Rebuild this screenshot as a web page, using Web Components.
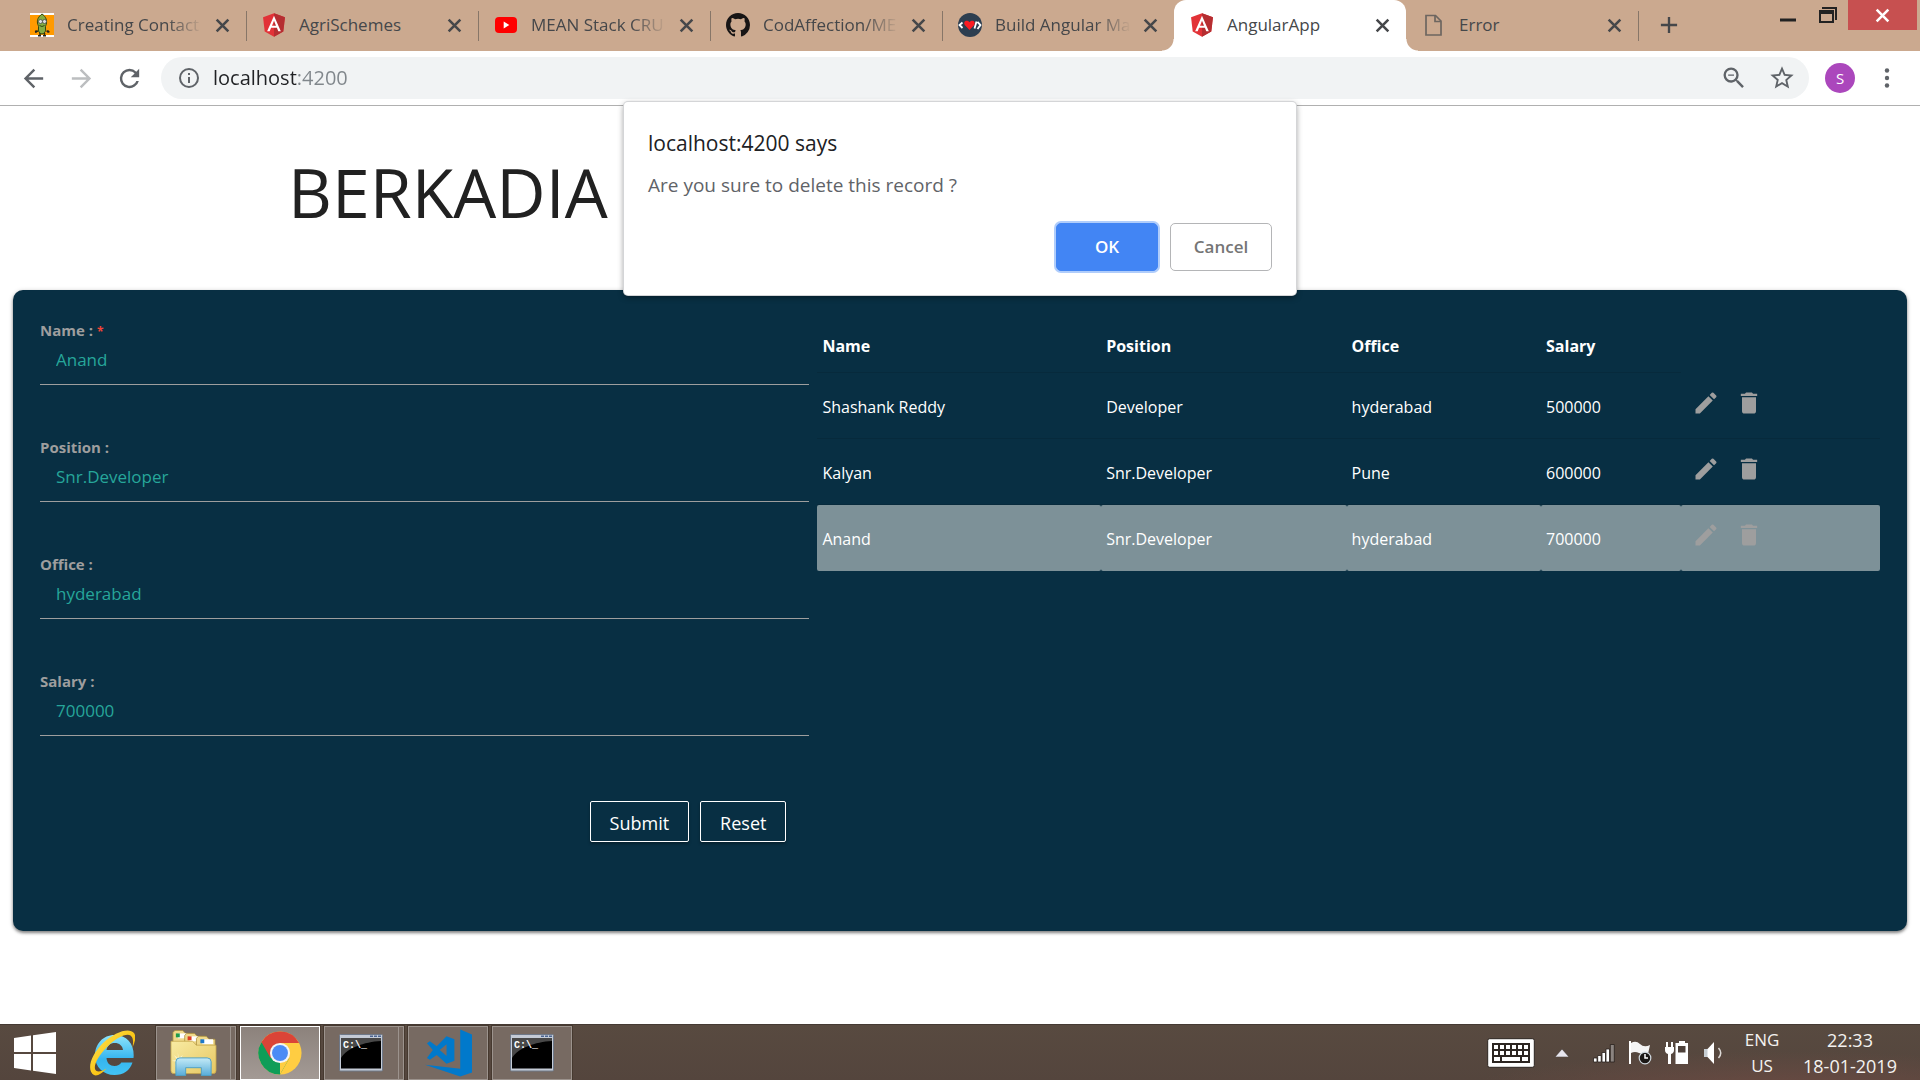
<!DOCTYPE html>
<html lang="en">
<head>
<meta charset="utf-8">
<title>AngularApp</title>
<style>
  html, body { margin: 0; height: 100%; }
  body { font-family: "Open Sans", "Noto Sans", sans-serif; background: #fff; color: #212121; }
</style>
</head>
<body>
<desktop-shell>
  <browser-tabs slot="browser"></browser-tabs>
  <browser-toolbar slot="browser"></browser-toolbar>
  <employee-page slot="page"></employee-page>
  <confirm-dialog slot="dialog" heading="localhost:4200 says">Are you sure to delete this record ?</confirm-dialog>
  <task-bar slot="taskbar"></task-bar>
</desktop-shell>

<script>
const ICONS = {
  close: ['0 0 16 16', '<path d="M2.5 2.5l11 11m0-11l-11 11" stroke="currentColor" stroke-width="2.4" fill="none"/>'],
  plus: ['0 0 20 20', '<path d="M10 1v18M1 10h18" stroke="currentColor" stroke-width="2.6" fill="none"/>'],
  minimize: ['0 0 16 16', '<path d="M0 6.5h16v3H0z" fill="currentColor"/>'],
  restore: ['0 0 18 16', '<path d="M3 0h15v13h-2V2H3zM0 3h15v13H0zm2 4v7h11V7z" fill="currentColor" fill-rule="evenodd"/>'],
  back: ['0 0 24 24', '<path d="M20 11H7.83l5.59-5.59L12 4l-8 8 8 8 1.41-1.41L7.83 13H20v-2z" fill="currentColor"/>'],
  forward: ['0 0 24 24', '<path d="M4 11h12.17l-5.59-5.59L12 4l8 8-8 8-1.41-1.41L16.17 13H4v-2z" fill="currentColor"/>'],
  reload: ['0 0 24 24', '<path d="M17.65 6.35A7.96 7.96 0 0 0 12 4a8 8 0 1 0 7.73 10h-2.08A6 6 0 1 1 12 6c1.66 0 3.14.69 4.22 1.78L13 11h7V4l-2.35 2.35z" fill="currentColor"/>'],
  info: ['0 0 24 24', '<path d="M11 17h2v-6h-2v6zm1-15a10 10 0 1 0 0 20 10 10 0 0 0 0-20zm0 18a8 8 0 1 1 0-16 8 8 0 0 1 0 16zM11 9h2V7h-2v2z" fill="currentColor"/>'],
  zoomout: ['0 0 24 24', '<path d="M15.5 14h-.79l-.28-.27A6.47 6.47 0 0 0 16 9.5 6.5 6.5 0 1 0 9.5 16c1.61 0 3.09-.59 4.23-1.57l.27.28v.79l5 4.99L20.49 19l-4.99-5zm-6 0a4.5 4.5 0 1 1 0-9 4.5 4.5 0 0 1 0 9zM7 9h5v1H7z" fill="currentColor"/>'],
  star: ['0 0 24 24', '<path d="M22 9.24l-7.19-.62L12 2 9.19 8.63 2 9.24l5.46 4.73L5.82 21 12 17.27 18.18 21l-1.63-7.03L22 9.24zM12 15.4l-3.76 2.27 1-4.28-3.32-2.88 4.38-.38L12 6.1l1.71 4.04 4.38.38-3.32 2.88 1 4.28L12 15.4z" fill="currentColor"/>'],
  dots: ['0 0 24 24', '<g fill="currentColor"><circle cx="12" cy="4.5" r="2.2"/><circle cx="12" cy="12" r="2.2"/><circle cx="12" cy="19.5" r="2.2"/></g>'],
  edit: ['0 0 24 24', '<path d="M3 17.25V21h3.75L17.81 9.94l-3.75-3.75L3 17.25zM20.71 7.04a1 1 0 0 0 0-1.41l-2.34-2.34a1 1 0 0 0-1.41 0l-1.83 1.83 3.75 3.75 1.83-1.83z" fill="currentColor"/>'],
  trash: ['0 0 24 24', '<path d="M6 19c0 1.1.9 2 2 2h8c1.1 0 2-.9 2-2V7H6v12zM19 4h-3.5l-1-1h-5l-1 1H5v2h14V4z" fill="currentColor"/>'],
  angular: ['28 28 194 204', '<path d="M125 30L31.9 63.2l14.2 123.1L125 230l78.9-43.7 14.2-123.1z" fill="#e23237"/><path d="M125 30v200l78.9-43.7 14.2-123.1z" fill="#b52e31"/><path d="M125 52.1L66.8 182.6h21.7l11.7-29.2h49.4l11.7 29.2H183zm17 83.3h-34l17-40.9z" fill="#fff"/>'],
  youtube: ['0 0 24 24', '<rect x="1" y="4" width="22" height="16" rx="4" fill="#f00"/><path d="M9.7 8.6v6.8l5.6-3.4z" fill="#fff"/>'],
  github: ['0 0 16 16', '<path d="M8 0C3.58 0 0 3.58 0 8c0 3.54 2.29 6.53 5.47 7.59.4.07.55-.17.55-.38 0-.19-.01-.82-.01-1.49-2.01.37-2.53-.49-2.69-.94-.09-.23-.48-.94-.82-1.13-.28-.15-.68-.52-.01-.53.63-.01 1.08.58 1.23.82.72 1.21 1.87.87 2.33.66.07-.52.28-.87.51-1.07-1.78-.2-3.64-.89-3.64-3.95 0-.87.31-1.59.82-2.15-.08-.2-.36-1.02.08-2.12 0 0 .67-.21 2.2.82a7.6 7.6 0 0 1 4 0c1.53-1.04 2.2-.82 2.2-.82.44 1.1.16 1.92.08 2.12.51.56.82 1.27.82 2.15 0 3.07-1.87 3.75-3.65 3.95.29.25.54.73.54 1.48 0 1.07-.01 1.93-.01 2.2 0 .21.15.46.55.38A8.01 8.01 0 0 0 16 8c0-4.42-3.58-8-8-8z" fill="#171515"/>'],
  codeheart: ['0 0 24 24', '<circle cx="12" cy="12" r="12" fill="#2d3e50"/><path d="M4.500 9.500L1.500 12l3 3M19.500 9l3 3-3 4M18.500 8.500l-2 7" stroke="#fff" stroke-width="1.800" fill="none"/><path d="M11.500 17L6.800 12C4.800 9 8.500 6 11.500 9.300 14.500 6 18 9 16.200 12z" fill="#fb1b22"/>'],
  pea: ['0 0 24 24', '<path d="M0 0h24v24H0z" fill="#fff"/><path d="M0 2h24v20H0z" fill="#ff9a00"/><path d="M10 20v3M14.500 20v3M8 18l-3 1M16.500 18l3 1" stroke="#26310f" stroke-width="1.500"/><path d="M12 1c-4 3-5 6-4.500 9 .2 2 1.500 3 1 5-.5 3 .5 5.500 3.500 6 3-.5 4-3 3.500-6-.5-2 1-3 1-5C17 6 15 3 12 1z" fill="#84ad42" stroke="#33440f"/><circle cx="10.500" cy="8.500" r="2" fill="#ddd" stroke="#444" stroke-width=".7"/><circle cx="14.500" cy="8.500" r="2" fill="#ddd" stroke="#444" stroke-width=".7"/><path d="M9.500 12.500q2.500 2 5 0" stroke="#33440f" fill="none"/><path d="M5 17.500h2v2H5zM17 17.500h2v2h-2zM8 22h3v1.500H8zM13 22h3v1.500h-3z" fill="#222"/>'],
  file: ['0 0 24 24', '<path d="M4 2.500h9.500L19 8v14H4z" fill="none" stroke="#6d6660" stroke-width="1.700"/><path d="M13 2.500V8.500h6" fill="none" stroke="#6d6660" stroke-width="1.700"/>'],
  windows: ['0 0 42 42', '<path d="M0 6l17-2.500V20H0zM19 3.200L42 0v20H19zM0 22h17v16.500L0 36zM19 22h23v20l-23-3.200z" fill="#fff"/>'],
  ie: ['0 0 46 46', '<defs><linearGradient id="b" x1="0" y1="0" x2="0" y2="1"><stop offset="0" stop-color="#8fe4fb"/><stop offset=".6" stop-color="#35b5ee"/><stop offset="1" stop-color="#43c3f4"/></linearGradient><linearGradient id="g" x1="0" y1="0" x2="1" y2="1"><stop offset="0" stop-color="#ffe95c"/><stop offset=".6" stop-color="#f9c211"/><stop offset="1" stop-color="#d99400"/></linearGradient></defs><path d="M44.500 28H17.500c.3 5 3.500 8 8 8 3.200 0 5.500-1.300 6.800-3.500h11.200C41 40.500 34.500 45 25.500 45 14 45 6 37 6 25.500S14 5 25.500 5c12 0 19.500 8.500 19.200 20.500zM34 20c-.5-4.300-3.700-7-8.300-7-4.500 0-7.500 2.700-8.200 7z" fill="url(#b)"/><path d="M5 45C-3 40 2 25 14 13 26 2 40-3 45 3c2.500 3.500 1 9-1.500 14.500 1-6 .8-10-2-12C37 3 27 8 18 17 8 27 3 38 7.500 41c2 1.200 6 0 10-2.500C13 43.500 8 46.500 5 45z" fill="url(#g)"/>'],
  explorer: ['0 0 48 46', '<defs><linearGradient id="f" x1="0" y1="0" x2="1" y2="1"><stop offset="0" stop-color="#f8eba3"/><stop offset="1" stop-color="#e6c762"/></linearGradient><linearGradient id="s" x1="0" y1="0" x2="0" y2="1"><stop offset="0" stop-color="#c4ebf7"/><stop offset="1" stop-color="#58acd9"/></linearGradient></defs><path d="M3 14V2l2-2h8l3 3h8v11z" fill="#efd98a" stroke="#ab8f3f" stroke-width=".8"/><path d="M8 3h10v5H8z" fill="#fff"/><path d="M6 3h4v4H6z" fill="#1f9b4b"/><path d="M15 14V5l2-2h8l3 3h8v9z" fill="#efd98a" stroke="#ab8f3f" stroke-width=".8"/><path d="M20 6h11v5H20z" fill="#fff"/><path d="M18 6h4v4h-4z" fill="#dd3f22"/><path d="M27 17V8l2-2h8l3 3h6v9z" fill="#efd98a" stroke="#ab8f3f" stroke-width=".8"/><path d="M33 9h11v5H33z" fill="#fff"/><path d="M31 9h4v4h-4z" fill="#1d78c8"/><path d="M1 11h22l4 4h20v26q0 3-3 3H4q-3 0-3-3z" fill="url(#f)" stroke="#c5a64c" stroke-width=".8"/><path d="M8 22l1 6 4-3-2 5 7 1-7 1 2 5-5-4-3 5 1-6-4-1 5-1-3-5 4 3z" fill="#fffce6" opacity=".65"/><path d="M6 46V32q0-4 4-4h28q4 0 4 4v14H32v-8H16v8z" fill="url(#s)" stroke="#4fa1c6"/>'],
  chrome: ['0 0 48 48', '<circle cx="24" cy="24" r="23.500" fill="#ffcd42"/><path d="M24 24L3.600 12.200A23.500 23.500 0 0 0 24 47.500L34.200 29.800z" fill="#0f9d58"/><path d="M24 13.200h20.800A23.500 23.500 0 0 0 3.700 12L13.800 29.800z" fill="#db4437"/><path d="M24 47.500L34 30l10.500-17H24z" fill="#ffcd42"/><circle cx="24" cy="24" r="11" fill="#f4f4f4"/><circle cx="24" cy="24" r="8.700" fill="#4c8bf5"/>'],
  cmd: ['0 0 44 38', '<rect x=".5" y=".5" width="43" height="36.500" rx="1" fill="#c4cbd6" stroke="#6e7888"/><path d="M2 4h40v30.500H2z" fill="#000"/><path d="M2 4h40v3C25 8 8 14 2 24z" fill="#484848"/><path d="M31 1.500h3v1.500h-3zm4 0h3v1.500h-3zm4 0h3v1.500h-3z" fill="#4c6590"/><text x="4" y="14" font-family="Liberation Mono, monospace" font-size="10" font-weight="700" fill="#fff">C:\\_</text>'],
  vscode: ['0 0 48 48', '<path d="M36 0l12 5v39l-12 4L0 36l36 4z" fill="#0179cb"/><path d="M22 7l8 3v22l-8 3-10-9-7 5-3-2 6-8-6-7 3-2 7 5zm0 8l-7 6 7 6z" fill="#0179cb" fill-rule="evenodd"/>'],
  keyboard: ['0 0 48 30', '<rect x=".7" y=".7" width="46.600" height="28.600" rx="2" fill="#fff" stroke="#2c2521"/><path d="M5 5h38v20H5z" fill="#2c2521"/><g fill="#fff"><path d="M7 7h4v4H7zm6 0h4v4h-4zm6 0h4v4h-4zm6 0h4v4h-4zm6 0h4v4h-4zm6 0h4v4h-4zM7 13h4v4H7zm6 0h4v4h-4zm6 0h4v4h-4zm6 0h4v4h-4zm6 0h4v4h-4zm6 0h4v4h-4zM7 19h6v4H7zm8 0h18v4H15zm20 0h6v4h-6z"/></g>'],
  chevron: ['0 0 14 8', '<path d="M0 8l7-8 7 8z" fill="#e8e6ee" stroke="#332b27" stroke-width=".5"/>'],
  signal: ['0 0 22 20', '<g stroke="#27201c" stroke-width=".8"><path d="M.5 15h3.500v4H.5zM4.700 12.500h3.500V19H4.700zM9 9.500h3.500V19H9zM13 6h3.500v13H13z" fill="#fff"/><path d="M17.300 1.500h4V19h-4z" fill="#8b8480"/></g>'],
  flag: ['0 0 24 24', '<path d="M1 0h2v23H1z" fill="#fff"/><path d="M3 2q5-3 9 1t10 1l-2 9q-5 1-9-1t-8 0z" fill="#f4f4f4"/><circle cx="17" cy="17" r="5.800" fill="#1b1715" stroke="#cfd8de" stroke-width="1.200"/><path d="M17 13v4h3" stroke="#fff" stroke-width="1.500" fill="none"/>'],
  battery: ['0 0 24 24', '<path d="M2 1v5M7 1v5" stroke="#fff" stroke-width="2"/><path d="M0 6h9v3q0 3-3 4v10H3V13q-3-1-3-4z" fill="#fff"/><path d="M14 0h6v2h3v21H10.500V2H14z" fill="#fff"/><path d="M13 5h7.500v6.500H13z" fill="#4d4039"/>'],
  speaker: ['0 0 20 22', '<path d="M1 7h4v8H1z" fill="#c6cdd2"/><path d="M4.500 7L11 0v22l-6.500-7z" fill="#fff"/><path d="M15.500 6q4.500 5 0 10" stroke="#ddd9d6" stroke-width="1.500" fill="none"/>'],
};

class UiIcon extends HTMLElement {
  connectedCallback() {
    if (this.shadowRoot) return;
    const [box, art] = ICONS[this.getAttribute('name')];
    this.attachShadow({ mode: 'open' }).innerHTML = `
      <style>
        :host { display: inline-flex; flex: none; width: var(--icon-width, 24px); height: var(--icon-height, var(--icon-width, 24px)); }
        svg { width: 100%; height: 100%; display: block; }
      </style>
      <svg viewBox="${box}" aria-hidden="true">${art}</svg>`;
  }
}

const BUTTON_RESET = `
  button { font: inherit; color: inherit; background: none; border: 0; padding: 0; margin: 0; display: inline-flex; align-items: center; justify-content: center; cursor: pointer; }
`;

class DesktopShell extends HTMLElement {
  constructor() {
    super();
    this.attachShadow({ mode: 'open' }).innerHTML = `
      <style>
        :host { display: flex; flex-direction: column; min-height: 100vh; }
        main { flex: 1; position: relative; }
        .overlay { position: absolute; z-index: 2; top: -4px; left: 0; right: 0; display: flex; justify-content: center; }
      </style>
      <header><slot name="browser"></slot></header>
      <main>
        <slot name="page"></slot>
        <div class="overlay"><slot name="dialog"></slot></div>
      </main>
      <slot name="taskbar"></slot>`;
  }
}

class BrowserTab extends HTMLElement {
  connectedCallback() {
    if (this.shadowRoot) return;
    this.attachShadow({ mode: 'open' }).innerHTML = `
      <style>
        ${BUTTON_RESET}
        :host { display: flex; align-items: center; position: relative; flex: 0 1 232px; min-width: 0; height: 51px; padding: 0 12px 1px 16px; box-sizing: border-box; color: #45474a; font-size: 17px; line-height: 24px; }
        :host([divider])::after { content: ""; position: absolute; right: -1px; top: 11px; width: 1px; height: 30px; background: #877668; }
        :host([active]) { background: #fff; border-radius: 12px 12px 0 0; }
        .flare { display: none; position: absolute; bottom: 0; width: 12px; height: 12px; }
        :host([active]) .flare { display: block; }
        .left { left: -12px; background: radial-gradient(circle at 0 0, transparent 11px, #fff 12px); }
        .right { right: -12px; background: radial-gradient(circle at 100% 0, transparent 11px, #fff 12px); }
        .title { flex: 1; min-width: 0; height: 24px; margin: 0 7px 0 13px; justify-content: flex-start; white-space: nowrap; overflow: hidden; }
        :host([fade]) .title { -webkit-mask-image: linear-gradient(to left, transparent, #000 36px); mask-image: linear-gradient(to left, transparent, #000 36px); }
        .close { width: 24px; height: 24px; --icon-width: 17px; }
      </style>
      <span class="flare left"></span><span class="flare right"></span>
      <ui-icon name="${this.getAttribute('icon')}"></ui-icon>
      <button class="title" role="tab"><slot></slot></button>
      <button class="close" aria-label="Close tab"><ui-icon name="close"></ui-icon></button>`;
  }
}

class BrowserTabs extends HTMLElement {
  constructor() {
    super();
    this.attachShadow({ mode: 'open' }).innerHTML = `
      <style>
        ${BUTTON_RESET}
        :host { display: flex; height: 51px; padding-left: 14px; background: #cba98f; }
        .new { width: 32px; height: 51px; margin-left: 15px; color: #45474a; --icon-width: 18px; box-sizing: border-box; padding-bottom: 1px; }
        .controls { display: flex; align-items: flex-start; margin-left: auto; padding-right: 3px; color: #222; }
        .controls button { width: 40px; height: 30px; }
        .min { --icon-width: 16px; }
        .min ui-icon { margin-top: 10px; }
        .restore { --icon-width: 18px; --icon-height: 16px; }
        .controls .quit { width: 69px; background: #c75050; color: #fff; --icon-width: 17px; }
      </style>
      <browser-tab icon="pea" divider fade>Creating Contact</browser-tab>
      <browser-tab icon="angular" divider>AgriSchemes</browser-tab>
      <browser-tab icon="youtube" divider fade>MEAN Stack CRU</browser-tab>
      <browser-tab icon="github" divider fade>CodAffection/ME</browser-tab>
      <browser-tab icon="codeheart" fade>Build Angular Ma</browser-tab>
      <browser-tab icon="angular" active>AngularApp</browser-tab>
      <browser-tab icon="file" divider>Error</browser-tab>
      <button class="new" aria-label="New tab"><ui-icon name="plus"></ui-icon></button>
      <div class="controls">
        <button class="min" aria-label="Minimize"><ui-icon name="minimize"></ui-icon></button>
        <button class="restore" aria-label="Restore"><ui-icon name="restore"></ui-icon></button>
        <button class="quit" aria-label="Close"><ui-icon name="close"></ui-icon></button>
      </div>`;
  }
}

class BrowserToolbar extends HTMLElement {
  constructor() {
    super();
    this.attachShadow({ mode: 'open' }).innerHTML = `
      <style>
        ${BUTTON_RESET}
        :host { display: flex; align-items: center; gap: 16px; padding: 6px 17px; background: #fff; border-bottom: 1px solid #b0b0b0; color: #5f6368; }
        .nav { width: 32px; height: 32px; --icon-width: 29px; }
        .off { color: #bcbec0; }
        .omnibox { flex: 1; display: flex; align-items: center; height: 42px; padding: 0 13px 0 16px; border-radius: 21px; background: #f1f3f4; box-sizing: border-box; --icon-width: 24px; }
        .omnibox input { flex: 1; min-width: 0; margin: 0 12px; padding: 0; border: 0; outline: 0; font: inherit; font-size: 20px; line-height: 28px; color: #202124;
          background: linear-gradient(to right, #202124 84px, #80868b 84px); -webkit-background-clip: text; background-clip: text; -webkit-text-fill-color: transparent; }
        .tools { display: flex; gap: 20px; --icon-width: 28px; }
        .avatar { width: 30px; height: 30px; border-radius: 50%; background: #ab47bc; color: #fff; font-size: 15px; line-height: 20px; }
        .menu { width: 32px; height: 32px; --icon-width: 24px; }
      </style>
      <button class="nav" aria-label="Back"><ui-icon name="back"></ui-icon></button>
      <button class="nav off" aria-label="Forward"><ui-icon name="forward"></ui-icon></button>
      <button class="nav" aria-label="Reload"><ui-icon name="reload"></ui-icon></button>
      <div class="omnibox">
        <ui-icon name="info"></ui-icon>
        <input type="text" aria-label="Address" value="localhost:4200">
        <div class="tools">
          <button aria-label="Zoom"><ui-icon name="zoomout"></ui-icon></button>
          <button aria-label="Bookmark"><ui-icon name="star"></ui-icon></button>
        </div>
      </div>
      <button class="avatar">S</button>
      <button class="menu" aria-label="Menu"><ui-icon name="dots"></ui-icon></button>`;
  }
}

class FormField extends HTMLElement {
  connectedCallback() {
    if (this.shadowRoot) return;
    const star = this.hasAttribute('required') ? ' <span class="star">*</span>' : '';
    this.attachShadow({ mode: 'open' }).innerHTML = `
      <style>
        :host { display: flex; flex-direction: column; padding-bottom: 7px; border-bottom: 1px solid #9e9e9e; }
        label { font-size: 15px; line-height: 22px; font-weight: 700; color: #9e9e9e; }
        .star { color: #f44336; font-size: 12px; line-height: 12px; }
        input { height: 36px; padding: 0 16px; border: 0; outline: 0; background: none; font: inherit; font-size: 17px; color: #26a69a; box-sizing: border-box; }
      </style>
      <label for="field">${this.getAttribute('label')} :${star}</label>
      <input id="field" type="text" value="${this.getAttribute('value')}">`;
  }
}

class EmployeeForm extends HTMLElement {
  constructor() {
    super();
    this.attachShadow({ mode: 'open' }).innerHTML = `
      <style>
        ${BUTTON_RESET}
        :host { display: block; min-width: 0; }
        form { display: flex; flex-direction: column; gap: 51px; padding-top: 1px; }
        .actions { display: flex; justify-content: flex-end; gap: 11px; padding: 14px 23px 0 0; }
        .actions button { height: 41px; padding: 3px 19px 0; box-sizing: border-box; border: 1px solid #fff; border-radius: 2px; color: #fff; font-size: 18px; line-height: 24px; box-shadow: 0 2px 3px rgba(0, 0, 0, .3); }
      </style>
      <form>
        <form-field label="Name" value="Anand" required></form-field>
        <form-field label="Position" value="Snr.Developer"></form-field>
        <form-field label="Office" value="hyderabad"></form-field>
        <form-field label="Salary" value="700000"></form-field>
        <div class="actions">
          <button type="button">Submit</button>
          <button type="button">Reset</button>
        </div>
      </form>`;
  }
}

class EmployeeTable extends HTMLElement {
  constructor() {
    super();
    const rows = [
      ['Shashank Reddy', 'Developer', 'hyderabad', '500000'],
      ['Kalyan', 'Snr.Developer', 'Pune', '600000'],
      ['Anand', 'Snr.Developer', 'hyderabad', '700000'],
    ];
    const body = rows.map((cells, i) => `
      <tr${i === 2 ? ' class="selected"' : ''}>
        ${cells.map(c => `<td>${c}</td>`).join('')}
        <td><div class="tools">
          <button aria-label="Edit"><ui-icon name="edit"></ui-icon></button>
          <button aria-label="Delete"><ui-icon name="trash"></ui-icon></button>
        </div></td>
      </tr>`).join('');
    this.attachShadow({ mode: 'open' }).innerHTML = `
      <style>
        ${BUTTON_RESET}
        :host { display: block; min-width: 0; }
        table { width: 100%; table-layout: fixed; border-collapse: separate; border-spacing: 0; color: #fff; font-size: 16px; line-height: 24px; }
        th, td { padding: 2px 5px 0; text-align: left; vertical-align: middle; border-bottom: 1px solid #072a3c; box-sizing: border-box; }
        thead th, thead td { height: 55px; font-weight: 700; }
        thead td, tbody tr:last-child td { border-bottom-color: transparent; }
        tbody td { height: 66px; }
        .selected td { background: #7d9198; border-radius: 2px; }
        .tools { display: flex; gap: 15px; padding: 0 6px 8px; color: #9e9e9e; --icon-width: 28px; }
      </style>
      <table>
        <colgroup><col style="width:26.7%"><col style="width:23.1%"><col style="width:18.3%"><col style="width:13.2%"><col></colgroup>
        <thead><tr><th>Name</th><th>Position</th><th>Office</th><th>Salary</th><td></td></tr></thead>
        <tbody>${body}</tbody>
      </table>`;
  }
}

class EmployeePage extends HTMLElement {
  constructor() {
    super();
    this.attachShadow({ mode: 'open' }).innerHTML = `
      <style>
        :host { display: block; }
        h1 { margin: 0; padding: 42px 0 54px 15%; font-size: 68px; line-height: 88px; font-weight: 400; color: #212121; }
        .card { display: grid; grid-template-columns: 42fr 58fr; gap: 8px; margin: 0 13px; padding: 28px 27px 89px; border-radius: 10px; background: #082f43; box-shadow: 0 2px 3px rgba(0, 0, 0, .4), 0 1px 5px rgba(0, 0, 0, .2); }
      </style>
      <h1>BERKADIA</h1>
      <section class="card">
        <employee-form></employee-form>
        <employee-table></employee-table>
      </section>`;
  }
}

class ConfirmDialog extends HTMLElement {
  connectedCallback() {
    if (this.shadowRoot) return;
    this.attachShadow({ mode: 'open' }).innerHTML = `
      <style>
        ${BUTTON_RESET}
        :host { display: block; width: 672px; padding: 24px; box-sizing: border-box; background: #fff; border-radius: 4px; box-shadow: 0 0 0 1px #d4d5d7, 0 2px 6px rgba(0, 0, 0, .45); }
        h2 { margin: 0; font-size: 21px; line-height: 34px; font-weight: 400; color: #202124; }
        p { margin: 0; padding-top: 8px; font-size: 19px; line-height: 34px; color: #5f6368; }
        .actions { display: flex; justify-content: flex-end; gap: 12px; padding-top: 21px; }
        .actions button { width: 102px; height: 48px; box-sizing: border-box; border: 1px solid #b4b5b7; border-radius: 5px; font-size: 17px; line-height: 24px; font-weight: 600; color: #757575; }
        .actions .ok { border-color: #4285f4; background: #4285f4; color: #fff; box-shadow: 0 0 0 2px #b0cdfb; }
      </style>
      <h2>${this.getAttribute('heading')}</h2>
      <p><slot></slot></p>
      <div class="actions">
        <button class="ok">OK</button>
        <button>Cancel</button>
      </div>`;
  }
}

class TaskBar extends HTMLElement {
  constructor() {
    super();
    this.attachShadow({ mode: 'open' }).innerHTML = `
      <style>
        ${BUTTON_RESET}
        :host { display: flex; align-items: center; height: 56px; padding: 0 10px; box-sizing: border-box; border-top: 1px solid #453a33; color: #f4f2f0;
          background: radial-gradient(ellipse 320px 40px at 93% 120%, #6b4b43, transparent), linear-gradient(#584a40, #54453d); }
        .start { width: 50px; height: 54px; --icon-width: 42px; }
        .ie { width: 84px; height: 54px; margin: 0 2px 0 10px; --icon-width: 46px; }
        .apps { display: flex; gap: 4px; --icon-width: 44px; }
        .apps button { width: 80px; height: 54px; box-sizing: border-box; border: 1px solid #9c938d; background: #776a62; box-shadow: 0 0 0 1px #46392f; }
        .apps .current { border-color: #fff; background: linear-gradient(#8c827c, #a39a95); }
        .apps .stack { padding-right: 6px; background: linear-gradient(#9c938d, #9c938d) right 4px top 0 / 1px 100% no-repeat #776a62; }
        .files { --icon-width: 47px; --icon-height: 46px; }
        .code { --icon-width: 47px; --icon-height: 48px; }
        .cmd { --icon-width: 44px; --icon-height: 38px; }
        .tray { display: flex; align-items: center; margin-left: auto; }
        .kbd { --icon-width: 48px; --icon-height: 30px; }
        .up { margin-left: 20px; --icon-width: 14px; --icon-height: 8px; }
        .sys { display: flex; align-items: center; gap: 13px; margin-left: 24px; }
        .sig { --icon-width: 22px; --icon-height: 20px; }
        .vol { --icon-width: 22px; }
        .text { font-size: 17px; line-height: 26px; display: flex; flex-direction: column; align-items: center; }
        .lang { width: 48px; margin-left: 14px; }
        .clock { width: 96px; margin-left: 16px; margin-right: 12px; font-size: 18px; }
      </style>
      <button class="start" aria-label="Start"><ui-icon name="windows"></ui-icon></button>
      <button class="ie" aria-label="Internet Explorer"><ui-icon name="ie"></ui-icon></button>
      <nav class="apps">
        <button class="files stack" aria-label="File Explorer"><ui-icon name="explorer"></ui-icon></button>
        <button class="current" aria-label="Chrome"><ui-icon name="chrome"></ui-icon></button>
        <button class="cmd stack" aria-label="Command Prompt"><ui-icon name="cmd"></ui-icon></button>
        <button class="code" aria-label="Visual Studio Code"><ui-icon name="vscode"></ui-icon></button>
        <button class="cmd" aria-label="Command Prompt"><ui-icon name="cmd"></ui-icon></button>
      </nav>
      <div class="tray">
        <button class="kbd" aria-label="Touch keyboard"><ui-icon name="keyboard"></ui-icon></button>
        <button class="up" aria-label="Show hidden icons"><ui-icon name="chevron"></ui-icon></button>
        <div class="sys">
          <ui-icon class="sig" name="signal"></ui-icon>
          <ui-icon name="flag"></ui-icon>
          <ui-icon name="battery"></ui-icon>
          <ui-icon class="vol" name="speaker"></ui-icon>
        </div>
        <div class="text lang"><span>ENG</span><span>US</span></div>
        <div class="text clock"><span>22:33</span><span>18-01-2019</span></div>
      </div>`;
  }
}

customElements.define('ui-icon', UiIcon);
customElements.define('browser-tab', BrowserTab);
customElements.define('browser-tabs', BrowserTabs);
customElements.define('browser-toolbar', BrowserToolbar);
customElements.define('form-field', FormField);
customElements.define('employee-form', EmployeeForm);
customElements.define('employee-table', EmployeeTable);
customElements.define('employee-page', EmployeePage);
customElements.define('confirm-dialog', ConfirmDialog);
customElements.define('task-bar', TaskBar);
customElements.define('desktop-shell', DesktopShell);
</script>
</body>
</html>
